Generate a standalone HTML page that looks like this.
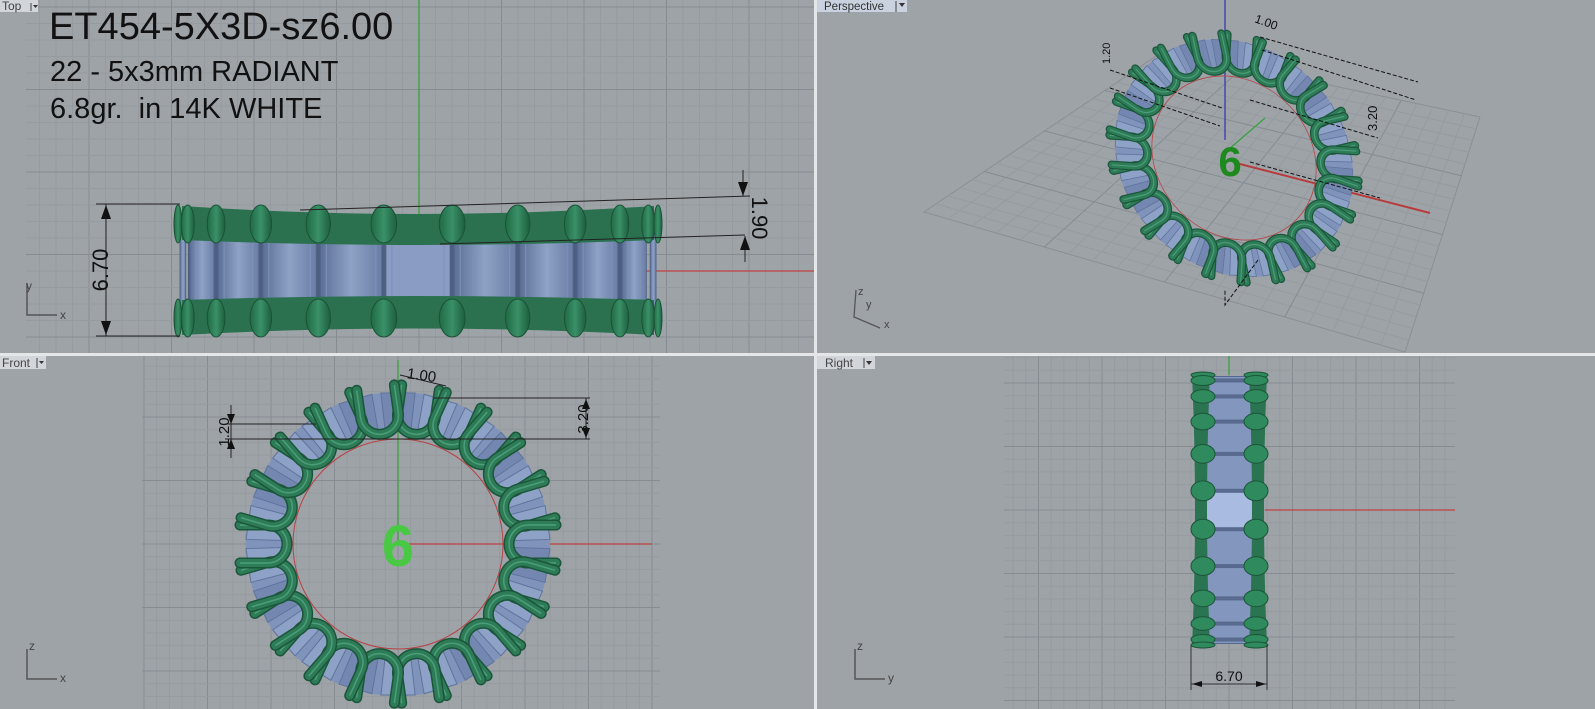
<!DOCTYPE html>
<html><head><meta charset="utf-8"><style>
html,body{margin:0;padding:0;background:#9ea3a8;overflow:hidden}
svg{display:block}
text{font-family:"Liberation Sans",sans-serif;white-space:pre}
</style></head><body>
<svg id="s" width="1595" height="709" xmlns="http://www.w3.org/2000/svg">
<defs>
<linearGradient id="st" x1="0" x2="1"><stop offset="0" stop-color="#5c6f96"/><stop offset=".5" stop-color="#8ea2c6"/><stop offset="1" stop-color="#6a7ea6"/></linearGradient>
<linearGradient id="gp" x1="0" x2="1"><stop offset="0" stop-color="#1f6a45"/><stop offset=".5" stop-color="#3a9068"/><stop offset="1" stop-color="#1d5e3e"/></linearGradient>
</defs>
<rect width="1595" height="709" fill="#9ea3a8"/>
<g id="grids"></g>
<rect x="814" y="0" width="3" height="709" fill="#e4e6e8"/>
<rect x="0" y="353" width="1595" height="3" fill="#e4e6e8"/>

<!-- TOP VIEW -->
<line x1="419" y1="0" x2="419" y2="215" stroke="#3aa040" stroke-width="1.3"/>
<line x1="640" y1="271" x2="814" y2="271" stroke="#c04040" stroke-width="1.3"/>
<g id="topring"></g>
<text x="49" y="39" font-size="38" fill="#111">ET454-5X3D-sz6.00</text>
<text x="50" y="81" font-size="29" fill="#111">22 - 5x3mm RADIANT</text>
<text x="50" y="118" font-size="29" fill="#111">6.8gr.  in 14K WHITE</text>
<g stroke="#222" stroke-width="1" fill="none">
<line x1="96" y1="204" x2="180" y2="204"/><line x1="96" y1="336" x2="180" y2="336"/>
<line x1="106" y1="204" x2="106" y2="336"/>
<line x1="300" y1="210" x2="750" y2="196"/><line x1="440" y1="244" x2="745" y2="235"/>
<line x1="743" y1="170" x2="743" y2="196"/><line x1="745" y1="236" x2="745" y2="262"/>
</g>
<path d="M106 205 l-5 14 h10z M106 335 l-5 -14 h10z M743 196 l-5 -14 h10z M745 236 l-5 14 h10z" fill="#111"/>
<text transform="translate(108 270) rotate(-90)" font-size="22" text-anchor="middle" fill="#111">6.70</text>
<text transform="translate(752 218) rotate(90)" font-size="22" text-anchor="middle" fill="#111">1.90</text>
<g stroke="#555" stroke-width="1.5" fill="none"><path d="M27 283 V315 H57"/></g>
<text x="26" y="290" font-size="12" fill="#444">y</text><text x="60" y="319" font-size="12" fill="#444">x</text>
<rect x="0" y="0" width="38" height="12" fill="#d2d5d9"/><text x="2" y="10" font-size="12" fill="#444">Top</text>
<path d="M31 3 v8" stroke="#444"/><path d="M33 5 h5 l-2.5 3z" fill="#333"/>

<!-- PERSPECTIVE -->
<g id="persp"></g>
<rect x="817" y="0" width="90" height="12" fill="#c9d2de"/><text x="824" y="10" font-size="11.5" fill="#333">Perspective</text>
<path d="M896 1 v11" stroke="#444"/><path d="M899 3 h6 l-3 4z" fill="#333"/>
<g stroke="#555" stroke-width="1.3" fill="none"><path d="M856 290 L854 317 L880 328"/></g>
<text x="858" y="295" font-size="11" fill="#444">z</text><text x="866" y="308" font-size="11" fill="#444">y</text><text x="884" y="328" font-size="11" fill="#444">x</text>

<!-- FRONT VIEW -->
<line x1="398" y1="360" x2="398" y2="544" stroke="#3aa040" stroke-width="1.3"/>
<line x1="398" y1="544" x2="652" y2="544" stroke="#c04040" stroke-width="1.3"/>
<g id="front"></g>
<text x="398" y="566" font-size="58" font-weight="bold" text-anchor="middle" fill="#49c943">6</text>
<g stroke="#222" stroke-width="1" fill="none">
<line x1="225" y1="424" x2="316" y2="424"/><line x1="225" y1="439" x2="520" y2="439"/>
<line x1="433" y1="398" x2="590" y2="398"/><line x1="520" y1="439" x2="590" y2="439"/>
<line x1="586" y1="398" x2="586" y2="439"/>
<line x1="231" y1="405" x2="231" y2="458"/>
<line x1="400" y1="375" x2="446" y2="386"/>
</g>
<path d="M586 399 l-4 10 h8z M586 438 l-4 -10 h8z M231 424 l-4 -10 h8z M231 439 l-4 10 h8z" fill="#111"/>
<text transform="translate(229 432) rotate(-90)" font-size="15" text-anchor="middle" fill="#111">1.20</text>
<text transform="translate(588 419) rotate(-90)" font-size="15" text-anchor="middle" fill="#111">3.20</text>
<text x="407" y="380" font-size="15" fill="#111" transform="rotate(8 420 375)">1.00</text>
<g stroke="#555" stroke-width="1.5" fill="none"><path d="M27 649 V679 H57"/></g>
<text x="29" y="650" font-size="12" fill="#444">z</text><text x="60" y="682" font-size="12" fill="#444">x</text>
<rect x="0" y="356" width="46" height="13" fill="#d2d5d9"/><text x="2" y="367" font-size="12" fill="#444">Front</text>
<path d="M37 358 v10" stroke="#444"/><path d="M39 361 h5 l-2.5 3z" fill="#333"/>

<!-- RIGHT VIEW -->
<line x1="1229" y1="356" x2="1229" y2="375" stroke="#3aa040" stroke-width="1.3"/>
<line x1="1265" y1="510" x2="1455" y2="510" stroke="#c04040" stroke-width="1.3"/>
<g id="right"></g>
<g stroke="#333" stroke-width="1" fill="none">
<line x1="1191" y1="645" x2="1191" y2="690"/><line x1="1267" y1="645" x2="1267" y2="690"/>
<line x1="1191" y1="684" x2="1267" y2="684"/>
</g>
<path d="M1192 684 l10 -3 v6z M1266 684 l-10 -3 v6z" fill="#111"/>
<text x="1229" y="681" font-size="14" text-anchor="middle" fill="#111">6.70</text>
<g stroke="#555" stroke-width="1.5" fill="none"><path d="M855 649 V679 H885"/></g>
<text x="857" y="650" font-size="12" fill="#444">z</text><text x="888" y="682" font-size="12" fill="#444">y</text>
<rect x="817" y="356" width="58" height="13" fill="#d2d5d9"/><text x="825" y="367" font-size="12" fill="#444">Right</text>
<path d="M864 358 v10" stroke="#444"/><path d="M866 361 h6 l-3 4z" fill="#333"/>
</svg>
<script>
const NS="http://www.w3.org/2000/svg";
function el(p,t,a){const e=document.createElementNS(NS,t);for(const k in a)e.setAttribute(k,a[k]);p.appendChild(e);return e;}
const G=document.getElementById('grids');
function grid(x0,y0,x1,y1,ox,oy,step){
 for(let i=-40;i<80;i++){const x=ox+i*step;if(x<x0||x>x1)continue;el(G,'line',{x1:x,y1:y0,x2:x,y2:y1,stroke:i%5==0?'#878c92':'#969ba0','stroke-width':1});}
 for(let i=-40;i<80;i++){const y=oy+i*step;if(y<y0||y>y1)continue;el(G,'line',{x1:x0,y1:y,x2:x1,y2:y,stroke:i%5==0?'#878c92':'#969ba0','stroke-width':1});}
}
grid(26,0,814,353,419,172,16.5);
grid(142,356,660,709,398,544,12.7);
grid(1004,356,1455,709,1229,510,12.7);
const T=document.getElementById('topring');
const cx=418,R=240,da=2*Math.PI/22;
el(T,'rect',{x:188,y:222,width:452,height:98,fill:'#4d5e80'});
for(let k=-6;k<=6;k++){const a1=k*da-da/2,a2=k*da+da/2;
 const A=Math.max(a1,-Math.PI/2),B=Math.min(a2,Math.PI/2);if(A>=B)continue;
 const xa=cx+R*Math.sin(A)+2,xb=cx+R*Math.sin(B)-2;
 el(T,'rect',{x:xa,y:226,width:Math.max(1,xb-xa),height:94,fill:k==0?'#8a9cc4':'url(#st)',stroke:'#51648a','stroke-width':1});
 if(xb-xa>20)el(T,'rect',{x:xa+6,y:238,width:xb-xa-12,height:70,fill:'none',stroke:'#7f92b8','stroke-width':1});
}
el(T,'path',{d:'M182 206 Q418 222 654 206 L654 240 Q418 250 182 240Z',fill:'#2b7150'});
el(T,'path',{d:'M182 300 Q418 292 654 300 L654 335 Q418 322 182 335Z',fill:'#2b7150'});
for(let k=-6;k<=5;k++){const a=k*da+da/2;if(Math.abs(a)>Math.PI/2)continue;const x=cx+R*Math.sin(a);const w=8+18*Math.cos(a);
 for(const y of [206,300]){el(T,'ellipse',{cx:x,cy:y+18,rx:w/2,ry:19,fill:'url(#gp)',stroke:'#1b5236','stroke-width':1});}
}
function ring(g,cx,cy,s,red){
 const ro=152*s,ri=116*s;
 el(g,'circle',{cx,cy,r:(ro+ri)/2,fill:'none',stroke:'#7f93bb','stroke-width':ro-ri});
 const p=(r,b)=>[cx+r*Math.sin(b),cy-r*Math.cos(b)];
 for(let i=0;i<22;i++){const a=i*da;
  const a1=a-da/2+0.03,a2=a+da/2-0.03;const P=[p(ro,a1),p(ro,a2),p(ri,a2),p(ri,a1)];
  el(g,'polygon',{points:P.map(q=>q.join(',')).join(' '),fill:i%3?'#8ea2c8':'#7387b0',stroke:'#5f739c','stroke-width':1});
  el(g,'polygon',{points:[p(ro-4*s,a),p(ri+6*s,a1+0.06),p(ri+6*s,a2-0.06)].map(q=>q.join(',')).join(' '),fill:'#6b7fa8'});
 }
 if(red)el(g,'circle',{cx,cy,r:105*s,fill:'none',stroke:'#b84040','stroke-width':1});
 for(let i=0;i<22;i++){const a=i*da+da/2;
  const o=[Math.sin(a),-Math.cos(a)],t=[Math.cos(a),Math.sin(a)];
  const C=p(130*s,a),w=19*s,L=28*s;
  const q=(u,v)=>[C[0]+o[0]*u+t[0]*v,C[1]+o[1]*u+t[1]*v];
  const d=`M${q(L,-w)} L${q(0,-w)} A${w} ${w} 0 0 0 ${q(0,w)} L${q(L,w)}`;
  el(g,'path',{d,fill:'none',stroke:'#1b553a','stroke-width':11*s,'stroke-linecap':'round'});
  el(g,'path',{d,fill:'none',stroke:'#2d7c57','stroke-width':8*s,'stroke-linecap':'round'});
  el(g,'path',{d,fill:'none',stroke:'#4c9e78','stroke-width':1.5*s});
 }
}
ring(document.getElementById('front'),398,544,1,true);
const P=document.getElementById('persp');
const pts=[[924,212],[1165,50],[1480,117],[1405,352]];
el(P,'polygon',{points:pts.map(q=>q.join(',')).join(' '),fill:'none',stroke:'#8a8f95','stroke-width':1});
for(let i=1;i<20;i++){const t=i/20;
 const a=[pts[0][0]+(pts[1][0]-pts[0][0])*t,pts[0][1]+(pts[1][1]-pts[0][1])*t],b=[pts[3][0]+(pts[2][0]-pts[3][0])*t,pts[3][1]+(pts[2][1]-pts[3][1])*t];
 el(P,'line',{x1:a[0],y1:a[1],x2:b[0],y2:b[1],stroke:i%5?'#969ba0':'#868b91'});
 const c=[pts[0][0]+(pts[3][0]-pts[0][0])*t,pts[0][1]+(pts[3][1]-pts[0][1])*t],d=[pts[1][0]+(pts[2][0]-pts[1][0])*t,pts[1][1]+(pts[2][1]-pts[1][1])*t];
 el(P,'line',{x1:c[0],y1:c[1],x2:d[0],y2:d[1],stroke:i%5?'#969ba0':'#868b91'});
}
el(P,'line',{x1:1236,y1:163,x2:1430,y2:213,stroke:'#b83a3a','stroke-width':2});
el(P,'line',{x1:1225,y1:0,x2:1225,y2:140,stroke:'#3a3ab0','stroke-width':1.3});
el(P,'line',{x1:1228,y1:150,x2:1265,y2:118,stroke:'#3aa040','stroke-width':1.3});
const pg=el(P,'g',{transform:'translate(1234 158) matrix(0.78 0.05 0.06 0.78 0 0) translate(-398 -544)'});
ring(pg,398,544,1,true);
el(P,'text',{x:1230,y:176,'font-size':42,'font-weight':'bold','text-anchor':'middle',fill:'#1e8a1e'}).textContent='6';
el(P,'path',{d:'M1110 70 L1222 108 M1110 88 L1220 126 M1260 37 L1418 82 M1262 50 L1416 100 M1250 100 L1378 138 M1250 162 L1380 198 M1258 260 L1225 305 V290',stroke:'#111','stroke-width':1,'stroke-dasharray':'4 2',fill:'none'});
el(P,'text',{x:1366,y:130,'font-size':13,fill:'#111',transform:'rotate(-90 1372 125)'}).textContent='3.20';
el(P,'text',{x:1254,y:22,'font-size':12,fill:'#111',transform:'rotate(20 1254 22)'}).textContent='1.00';
el(P,'text',{x:1104,y:62,'font-size':11,fill:'#111',transform:'rotate(-90 1108 60)'}).textContent='1.20';
const Rg=document.getElementById('right');
el(Rg,'rect',{x:1200,y:378,width:58,height:265,fill:'#5a6b8f'});
for(let k=-7;k<=7;k++){const a1=k*da-da/2,a2=k*da+da/2;const A=Math.max(a1,-Math.PI/2),B=Math.min(a2,Math.PI/2);if(A>=B)continue;
 const y1=510+135*Math.sin(A)+1.5,y2=510+135*Math.sin(B)-1.5;
 el(Rg,'rect',{x:1204,y:y1,width:50,height:Math.max(1,y2-y1),fill:k==0?'#a9bbe0':'#8396bd',stroke:'#55688f'});
}
el(Rg,'path',{d:'M1192 374 L1210 374 Q1204 510 1210 646 L1192 646 Q1198 510 1192 374Z M1267 374 L1249 374 Q1255 510 1249 646 L1267 646 Q1261 510 1267 374Z',fill:'#2b7452'});
for(let k=-6;k<=5;k++){const a=k*da+da/2;if(Math.abs(a)>Math.PI/2)continue;const y=510+135*Math.sin(a);const h=3+7*Math.cos(a);
 el(Rg,'ellipse',{cx:1203,cy:y,rx:12,ry:h,fill:'#2f8a5e',stroke:'#1b5538'});
 el(Rg,'ellipse',{cx:1256,cy:y,rx:12,ry:h,fill:'#2f8a5e',stroke:'#1b5538'});
}
</script>
</body></html>
